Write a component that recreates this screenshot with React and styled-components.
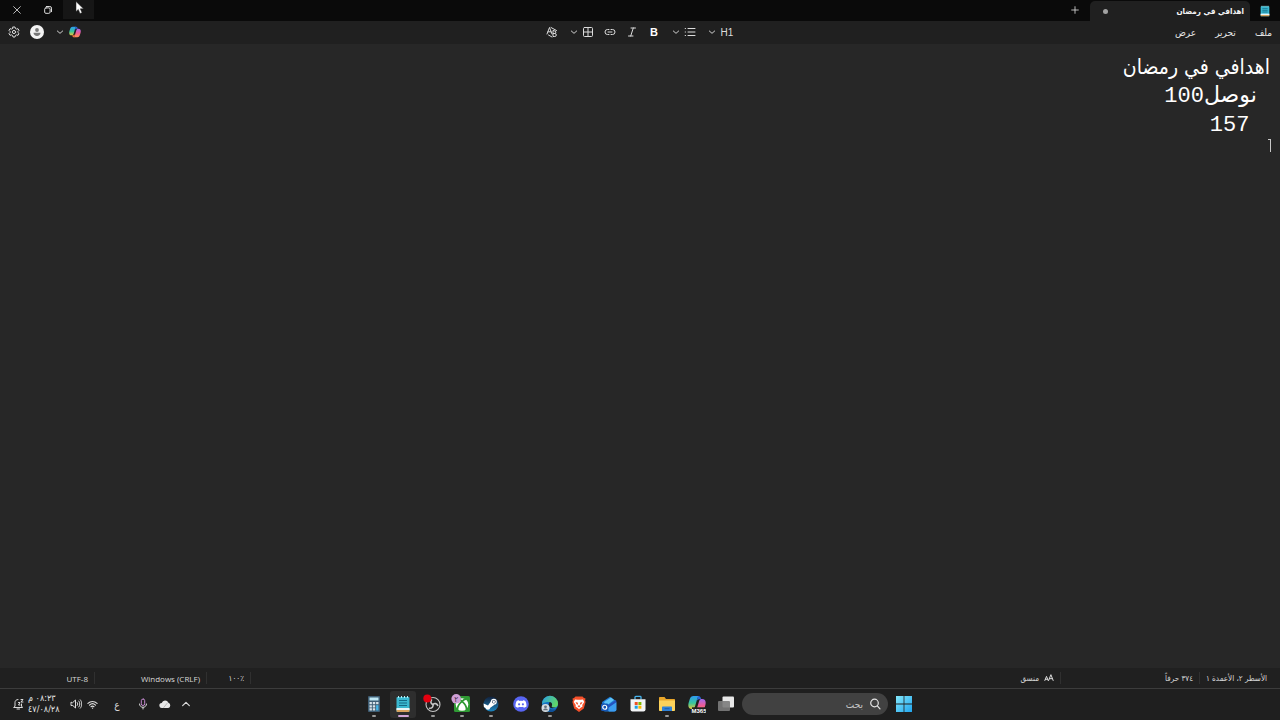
import { useState } from 'react';
import styled, { createGlobalStyle } from 'styled-components';

const GlobalStyle = createGlobalStyle`
  * {
    box-sizing: border-box;
  }
  body {
    margin: 0;
    background: #272727;
    color: #e4e4e4;
    font-family: 'DejaVu Sans Condensed', 'DejaVu Sans', sans-serif;
    font-size: 9px;
  }
  button, input {
    font: inherit;
    color: inherit;
    border: none;
    background: none;
    padding: 0;
    margin: 0;
    outline: none;
  }
  svg {
    display: block;
    flex: none;
  }
`;

const Screen = styled.div`
  display: flex;
  flex-direction: column;
  height: 100vh;
  overflow: hidden;
`;

const TitleBar = styled.header`
  display: flex;
  height: 21px;
  flex: none;
  background: #0a0a0a;
`;

const AppIcon = styled.div`
  display: flex;
  align-items: center;
  justify-content: center;
  width: 30px;
`;

const Tab = styled.div`
  display: flex;
  align-items: center;
  width: 160px;
  height: 20px;
  margin-top: 1px;
  padding: 0 6px 0 13px;
  border-radius: 5px 5px 0 0;
  background: #202020;
  font-size: 8px;
  font-weight: 700;
  color: #f4f4f4;
`;

const Dot = styled.span`
  width: 5px;
  height: 5px;
  margin-right: auto;
  border-radius: 50%;
  background: #a2a2a2;
`;

const IconButton = styled.button`
  display: flex;
  align-items: center;
  justify-content: center;
  width: ${p => p.$width || 14}px;
  height: 20px;
  color: #dcdcdc;
`;

const WindowButtons = styled.div`
  display: flex;
  margin-right: auto;
  padding-left: 1px;
`;

const WindowButton = styled(IconButton)`
  width: 31px;
  height: 19px;
  background: ${p => p.$hover ? '#161616' : 'transparent'};
`;

const Toolbar = styled.div`
  display: grid;
  grid-template-columns: 1fr auto 1fr;
  align-items: center;
  height: 23px;
  flex: none;
  padding-bottom: 1px;
  background: #202020;
`;

const Menu = styled.nav`
  display: flex;
  gap: 19px;
  padding-right: 8px;
  font-size: 10px;
`;

const Tools = styled.div`
  display: flex;
  align-items: center;
  gap: 8px;
  direction: ltr;
`;

const AccountTools = styled(Tools)`
  gap: 9px;
  padding-left: 7px;
`;

const ToolGroup = styled.div`
  display: flex;
  align-items: center;
`;

const LetterButton = styled(IconButton)`
  font-family: 'Liberation Sans', sans-serif;
  font-size: ${p => p.$bold ? 11 : 10}px;
  font-weight: ${p => p.$bold ? 700 : 400};
  color: ${p => p.$bold ? '#fff' : '#dcdcdc'};
`;

const Avatar = styled.span`
  display: flex;
  align-items: center;
  justify-content: center;
  flex: none;
  width: 14px;
  height: 14px;
  border-radius: 50%;
  background: #f3f3f3;
`;

const Editor = styled.main`
  position: relative;
  display: flex;
  flex-direction: column;
  flex: 1;
  min-height: 0;
  padding: 9px 10px;
  background: #272727;
`;

const Line = styled.input`
  width: 100%;
  height: 29px;
  color: #fff;
  font-family: 'Liberation Mono', 'DejaVu Sans', monospace;
  font-size: 22px;
  line-height: 29px;
`;

const TextLine = styled(Line)`
  font-family: 'DejaVu Sans Condensed', 'DejaVu Sans', sans-serif;
  font-size: 21px;
`;

const Caret = styled.span`
  position: absolute;
  top: 95px;
  right: 9px;
  width: 3px;
  height: 13px;
  border-right: 1px solid #c8c8c8;
  border-top: 1px solid #c8c8c8;
`;

const StatusBar = styled.footer`
  display: flex;
  align-items: center;
  height: 20px;
  flex: none;
  background: #202020;
  color: #d8d8d8;
  font-size: 8px;
`;

const StatusCell = styled.div`
  display: flex;
  align-items: center;
  gap: 5px;
  height: 12px;
  padding-right: ${p => p.$first ? 13 : 6}px;
  flex: ${p => p.$width ? 'none' : '1'};
  width: ${p => p.$width ? `${p.$width}px` : 'auto'};
  border-right: ${p => p.$first ? 'none' : '1px solid #303030'};
  white-space: nowrap;
`;

const Latin = styled.span`
  direction: ltr;
  font-family: 'Open Sans', sans-serif;
`;

const Taskbar = styled.footer`
  display: grid;
  grid-template-columns: 1fr auto 1fr;
  align-items: center;
  height: 32px;
  flex: none;
  border-top: 1px solid #3c3c3c;
  padding-bottom: 1px;
  background: #1f1f1f;
`;

const Dock = styled.div`
  display: flex;
  align-items: center;
  grid-column: 2;
  gap: 3px;
  padding-right: 2px;
`;

const Apps = styled.div`
  display: flex;
  justify-content: space-between;
  width: 378px;
`;

const AppButton = styled.button`
  position: relative;
  display: flex;
  align-items: center;
  justify-content: center;
  width: 26px;
  height: 27px;
  border-radius: 3px;
  background: ${p => p.$active ? '#2e2e2e' : 'transparent'};
  &::after {
    content: '';
    position: absolute;
    bottom: 1px;
    left: ${p => p.$active ? 8 : 11}px;
    width: ${p => p.$active ? 11 : 4}px;
    height: 2px;
    border-radius: 1px;
    background: ${p => p.$active ? '#d3a6d8' : '#999'};
    display: ${p => p.$active || p.$running ? 'block' : 'none'};
  }
`;

const Search = styled.label`
  display: flex;
  align-items: center;
  gap: 6px;
  width: 146px;
  height: 22px;
  padding: 0 7px;
  border-radius: 11px;
  background: #414141;
  input {
    flex: 1;
    min-width: 0;
    font-size: 10px;
  }
  input::placeholder {
    color: #c6c6c6;
    opacity: 1;
  }
`;

const Tray = styled.div`
  display: flex;
  align-items: center;
  justify-self: end;
  direction: ltr;
  padding-left: 8px;
`;

const Clock = styled.button`
  direction: rtl;
  width: 32px;
  margin-right: 8px;
  text-align: left;
  line-height: 11px;
  white-space: nowrap;
`;

const Language = styled(IconButton)`
  font-size: 10px;
`;

const Pointer = styled.svg`
  position: absolute;
  top: 1px;
  left: 75px;
`;

function Stroke({ size = 12, width = 1, children }) {
  return (
    <svg width={size} height={size} viewBox="0 0 12 12" fill="none" stroke="currentColor"
      strokeWidth={width} strokeLinecap="round" strokeLinejoin="round">
      {children}
    </svg>
  )
}

function Chevron() {
  return <Stroke size={8} width={1.4}><path d="M2 4.5 6 8l4-3.5" /></Stroke>
}

function NotepadIcon({ size }) {
  return (
    <svg width={size} height={size} viewBox="0 0 18 18">
      <rect x="2.5" y="2" width="13" height="15" rx="1" fill="#3ab8d0" />
      <path d="M2.5 14h13v2a1 1 0 0 1-1 1h-11a1 1 0 0 1-1-1z" fill="#d8a25e" />
      <path d="M2.5 13h13v2h-13z" fill="#e8f6f8" />
      <path d="M5 5.5h8M5 8h8M5 10.5h8" stroke="#126a85" strokeWidth="1.1" />
      <path d="M4.5 1v2M7.5 1v2M10.5 1v2M13.5 1v2" stroke="#b6eef5" strokeWidth="1" />
    </svg>
  )
}

function CopilotIcon({ size, label }) {
  return (
    <svg width={size} height={size} viewBox="0 0 18 18">
      <defs>
        <linearGradient id="cpA" x1="0" y1="0" x2="0" y2="1">
          <stop offset="0" stopColor="#2d9bf3" />
          <stop offset=".55" stopColor="#38c59a" />
          <stop offset="1" stopColor="#e9c63c" />
        </linearGradient>
        <linearGradient id="cpB" x1="0" y1="0" x2="0" y2="1">
          <stop offset="0" stopColor="#a06bf0" />
          <stop offset=".5" stopColor="#ee5b97" />
          <stop offset="1" stopColor="#ff9250" />
        </linearGradient>
      </defs>
      <path d="M5.500 1H11C9.500 2 9.200 4 8.600 6L7 11.500c-.6 2-1.500 2.500-3 2.500C.5 14-.2 11.500.6 8l1.200-4C2.400 2 3.600 1 5.500 1z" fill="url(#cpA)" />
      <path d="M10 1c2.500 0 2.700 1.300 3.200 3.300H11C9.500 4.500 8.800 5.500 8 8z" fill="#2868d8" />
      <path d="M12.500 17H7c1.500-1 1.800-3 2.400-5L11 6.500c.6-2 1.500-2.500 3-2.500 3.500 0 4.200 2.500 3.400 6l-1.200 4c-.6 2-1.800 3-3.700 3z" fill="url(#cpB)" />
      <path d="M8 17c-2.500 0-2.700-1.300-3.200-3.300H7C8.500 13.500 9.200 12.500 10 10z" fill="#f2703f" />
      {label && (
        <>
          <path d="M4 12.300h14V18H4z" fill="#1f1f1f" />
          <text x="11" y="17.500" fontSize="6" fontWeight="700" fill="#fff" textAnchor="middle" fontFamily="Liberation Sans, sans-serif">{label}</text>
        </>
      )}
    </svg>
  )
}

function CalculatorIcon() {
  return (
    <svg width="18" height="18" viewBox="0 0 18 18">
      <rect x="3" y="1" width="12" height="16" rx="1" fill="#3f5d73" />
      <path d="M4.500 2.500h9v3h-9z" fill="#bfe8f5" />
      <path d="M4.500 7h2.400v2.200H4.500zM7.800 7h2.400v2.200H7.800zM4.500 10.200h2.400v2.200H4.500zM7.800 10.200h2.400v2.200H7.800zM4.500 13.300h2.400v2.200H4.500zM7.800 13.300h2.400v2.200H7.800z" fill="#d7e3ea" />
      <path d="M11.100 7h2.400v2.200h-2.400z" fill="#d7e3ea" />
      <path d="M11.100 10.200h2.400v5.300h-2.400z" fill="#45b5e6" />
    </svg>
  )
}

function ObsIcon() {
  return (
    <svg width="20" height="20" viewBox="0 0 20 20">
      <circle cx="10" cy="10.500" r="7" fill="#202020" stroke="#c5c5c5" strokeWidth="1.100" />
      <g fill="none" stroke="#c5c5c5" strokeWidth="1.600" strokeLinecap="round">
        <path d="M10 10.500c-2-.5-2.800-2.500-1.500-4.500" />
        <path d="M10 10.500c1.500-1.500 3.800-1.200 4.700.8" />
        <path d="M10 10.500c.5 2-1 3.900-3.400 3.800" />
      </g>
      <circle cx="4.300" cy="4.500" r="4" fill="#e3000f" />
    </svg>
  )
}

function XboxIcon() {
  return (
    <svg width="22" height="20" viewBox="0 0 22 20">
      <rect x="3" y="2" width="16" height="16" rx="1.500" fill="#2f9a34" />
      <circle cx="11" cy="10.500" r="6.300" fill="#fff" />
      <g fill="none" stroke="#2f9a34" strokeWidth="1.800" strokeLinecap="round">
        <path d="M7.200 5c1.300 0 2.600 1.200 3.800 2.400 2.600 2.200 4.500 5 4.600 8" />
        <path d="M14.800 5c-1.300 0-2.600 1.200-3.800 2.400-2.600 2.200-4.500 5-4.600 8" />
      </g>
      <circle cx="5.200" cy="4.800" r="4.800" fill="#cf9fd6" />
      <text x="5.200" y="8" fontSize="8" fill="#3d2543" textAnchor="middle">٢</text>
    </svg>
  )
}

function SteamIcon() {
  return (
    <svg width="18" height="18" viewBox="0 0 18 18">
      <defs>
        <linearGradient id="steam" x1="0" y1="0" x2="0" y2="1">
          <stop offset="0" stopColor="#12203a" />
          <stop offset="1" stopColor="#1b84be" />
        </linearGradient>
      </defs>
      <circle cx="9" cy="9" r="7.500" fill="url(#steam)" />
      <path d="M1.600 8.500 6 10.400l3-4.200 3.500 3.600-4.200 3a2.500 2.500 0 0 1-4.800.3L1.900 12z" fill="#fff" />
      <circle cx="11.800" cy="6.800" r="3" fill="#fff" />
      <circle cx="11.800" cy="6.800" r="1.800" fill="#1a3555" />
      <circle cx="11.800" cy="6.800" r="1.200" fill="#fff" />
    </svg>
  )
}

function DiscordIcon() {
  return (
    <svg width="18" height="18" viewBox="0 0 18 18">
      <circle cx="9" cy="9" r="7.800" fill="#5865f2" />
      <path d="M6.900 5.200c-1 .2-1.700.5-2.200.9-1 1.800-1.300 3.600-1.200 5.400.8.700 1.700 1.100 2.700 1.300l.6-1.100a8 8 0 0 0 4.400 0l.6 1.100c1-.2 1.900-.6 2.700-1.300.1-1.800-.2-3.600-1.200-5.400-.5-.4-1.200-.7-2.200-.9l-.5.8a8 8 0 0 0-3.200 0z" fill="#fff" />
      <circle cx="7.100" cy="9.300" r="1.100" fill="#5865f2" />
      <circle cx="10.900" cy="9.300" r="1.100" fill="#5865f2" />
    </svg>
  )
}

function EdgeIcon() {
  return (
    <svg width="18" height="18" viewBox="0 0 18 18">
      <defs>
        <linearGradient id="edge" x1="0" y1="0" x2="1" y2=".4">
          <stop offset="0" stopColor="#2a9ee8" />
          <stop offset="1" stopColor="#5fd668" />
        </linearGradient>
      </defs>
      <circle cx="9" cy="9" r="8" fill="#1673c2" />
      <path d="M1 9a8 8 0 0 1 16-.5c.1 3-2 4-4.200 4-1.800 0-2.800-.7-2.200-1.500 1-1.500.2-4-2.400-4C5 7 2.500 7.500 1 9z" fill="url(#edge)" />
      <path d="M7.500 8.500c-1.500 3 1 6.500 5.500 6 1 0 2.300-.7 2.700-1-1.800 3-5 4-7.500 3.500z" fill="#0f4f96" />
      <path d="M10.700 10.900c1-1.500.2-3.600-2-3.900-1.300 1.500-1.400 4.500.6 5.700 1.200.8 3.700.5 5-.4-2.200.5-4.300-.3-3.600-1.400z" fill="#1f1f1f" />
      <circle cx="4.500" cy="13" r="4" fill="#d5dbe0" />
      <circle cx="4.500" cy="11.800" r="1.400" fill="#65717b" />
      <path d="M2 15.300c.5-2.300 4.500-2.300 5 0z" fill="#65717b" />
    </svg>
  )
}

function BraveIcon() {
  return (
    <svg width="18" height="18" viewBox="0 0 18 18">
      <path d="m5.500 1.500 7 0 1.500 1.600 1.500.4-.4 2 .5 1.500-1.800 6.500L9 17l-4.800-3.500L2.400 7l.5-1.500-.4-2L4 3.100z" fill="#f4502a" />
      <path d="m5 4.500 2.500.3h3l2.500-.3 1.200 2.500-2 3 .3 1.500-2.300 1.400L9 14.300l-1.200-1.400-2.300-1.400.3-1.500-2-3z" fill="#fff" />
      <path d="m5.500 7 2.300.7.200 2L6.500 9zM12.500 7l-2.300.7-.2 2 1.500-.7zM7.500 11 9 10.200l1.500.8L9 12.500z" fill="#f4502a" />
    </svg>
  )
}

function OutlookIcon() {
  return (
    <svg width="18" height="18" viewBox="0 0 18 18">
      <path d="M2 7 10 1.800 16 6v8.500a2 2 0 0 1-2 2H5a2 2 0 0 1-2-2z" fill="#1f7ad6" />
      <path d="m4 7 7-4.500L14 5 6 11z" fill="#5ec4f7" />
      <path d="m16.500 7-10 6.500L9 16.500h5.500a2 2 0 0 0 2-2z" fill="#3c9df0" />
      <path d="m7 11 9-6 .5 2L8 13z" fill="#2552c0" />
      <rect x="1" y="8.500" width="7.500" height="7.500" rx="1.500" fill="#1556b5" />
      <circle cx="4.750" cy="12.250" r="2" fill="none" stroke="#fff" strokeWidth="1.200" />
    </svg>
  )
}

function StoreIcon() {
  return (
    <svg width="18" height="18" viewBox="0 0 18 18">
      <path d="M6 4.500V2.200c0-.5.300-.8.800-.8h4.400c.5 0 .8.300.8.800v2.300" fill="none" stroke="#46b4ee" strokeWidth="1.300" />
      <path d="M1.500 4.300h15v10.200a2 2 0 0 1-2 2h-11a2 2 0 0 1-2-2z" fill="#f2f4f6" />
      <path d="M5.700 7h3v3h-3z" fill="#f05125" />
      <path d="M9.400 7h3v3h-3z" fill="#7eb900" />
      <path d="M5.700 10.700h3v3h-3z" fill="#1ba1e6" />
      <path d="M9.400 10.700h3v3h-3z" fill="#fbb800" />
    </svg>
  )
}

function FolderIcon() {
  return (
    <svg width="18" height="18" viewBox="0 0 18 18">
      <path d="M1 3c0-.6.400-1 1-1h4.500L8 4h8c.6 0 1 .4 1 1v10H1z" fill="#e9a62a" />
      <path d="M1 5.500h16V15c0 .6-.4 1-1 1H2c-.6 0-1-.4-1-1z" fill="#fbd25b" />
      <path d="M4 12.500c0-.6.400-1 1-1h8c.6 0 1 .4 1 1V16H4z" fill="#2f82d8" />
      <path d="M6.500 13.700h5" stroke="#1b5fae" strokeWidth="1" />
    </svg>
  )
}

function TaskViewIcon() {
  return (
    <svg width="18" height="18" viewBox="0 0 18 18">
      <rect x="5.500" y="1.500" width="11.500" height="11" rx="1" fill="#e8e8e8" />
      <rect x="1" y="6" width="12" height="10" rx="1" fill="#7b7b7b" fillOpacity=".9" />
    </svg>
  )
}

function StartIcon() {
  return (
    <svg width="16" height="16" viewBox="0 0 16 16">
      <defs>
        <linearGradient id="start" x1="0" y1="0" x2="1" y2="1">
          <stop offset="0" stopColor="#84e8fb" />
          <stop offset="1" stopColor="#20a5ee" />
        </linearGradient>
      </defs>
      <path d="M0 0h7.600v7.600H0zM8.400 0H16v7.600H8.400zM0 8.400h7.600V16H0zM8.400 8.400H16V16H8.400z" fill="url(#start)" />
    </svg>
  )
}

const apps = [
  { name: 'عرض المهام', icon: <TaskViewIcon /> },
  { name: 'Microsoft 365', icon: <CopilotIcon size={18} label="M365" /> },
  { name: 'مستكشف الملفات', icon: <FolderIcon />, running: true },
  { name: 'Store', icon: <StoreIcon /> },
  { name: 'Outlook', icon: <OutlookIcon /> },
  { name: 'Brave', icon: <BraveIcon /> },
  { name: 'Edge', icon: <EdgeIcon />, running: true },
  { name: 'Discord', icon: <DiscordIcon /> },
  { name: 'Steam', icon: <SteamIcon />, running: true },
  { name: 'Xbox', icon: <XboxIcon />, running: true },
  { name: 'OBS', icon: <ObsIcon />, running: true },
  { name: 'المفكرة', icon: <NotepadIcon size={18} />, active: true },
  { name: 'الحاسبة', icon: <CalculatorIcon />, running: true },
];

function App() {
  const [lines, setLines] = useState(['اهدافي في رمضان', ' نوصل100', ' \u2004157', ''])

  const editLine = (index, value) => {
    setLines(lines.map((line, i) => i === index ? value : line))
  }

  return (
    <Screen dir="rtl" lang="ar">
      <GlobalStyle />
      <TitleBar>
        <AppIcon><NotepadIcon size={12} /></AppIcon>
        <Tab>
          <span>اهدافي في رمضان</span>
          <Dot />
        </Tab>
        <IconButton $width={31} aria-label="علامة تبويب جديدة">
          <Stroke size={10}><path d="M6 2v8M2 6h8" /></Stroke>
        </IconButton>
        <WindowButtons>
          <WindowButton $hover aria-label="تصغير" />
          <WindowButton aria-label="استعادة">
            <Stroke size={10} width={1.2}>
              <rect x="2" y="3.500" width="6.500" height="6.500" rx="1.500" />
              <path d="M4 1.800h4.200a2 2 0 0 1 2 2V8" />
            </Stroke>
          </WindowButton>
          <WindowButton aria-label="إغلاق">
            <Stroke size={10}><path d="m2 2 8 8M10 2l-8 8" /></Stroke>
          </WindowButton>
        </WindowButtons>
      </TitleBar>

      <Toolbar>
        <Menu>
          <button>ملف</button>
          <button>تحرير</button>
          <button>عرض</button>
        </Menu>
        <Tools>
          <IconButton aria-label="مسح التنسيق">
            <Stroke>
              <path d="M1 8 3.500 1.500 6 8M2 5.800h3M7 4.800v5.700h1.800a1.500 1.500 0 0 0 0-3H7h1.500a1.300 1.300 0 0 0 0-2.700zM5 1.500l5.500 3M2.500 9l3.500 2" />
            </Stroke>
          </IconButton>
          <ToolGroup>
            <IconButton aria-label="خيارات الجدول"><Chevron /></IconButton>
            <IconButton aria-label="جدول">
              <Stroke>
                <rect x="1.500" y="1.500" width="9" height="9" rx="1" />
                <path d="M6 1.500v9M1.500 6h9" />
              </Stroke>
            </IconButton>
          </ToolGroup>
          <IconButton aria-label="ارتباط">
            <Stroke>
              <path d="M5 3.500H3.500a2.500 2.500 0 0 0 0 5H5M7 3.500h1.500a2.500 2.500 0 0 1 0 5H7M4 6h4" />
            </Stroke>
          </IconButton>
          <IconButton aria-label="مائل">
            <Stroke><path d="M5 2h4.500M2.500 10H7M7.300 2l-2.600 8" /></Stroke>
          </IconButton>
          <LetterButton $bold aria-label="غامق">B</LetterButton>
          <ToolGroup>
            <IconButton aria-label="خيارات القائمة"><Chevron /></IconButton>
            <IconButton aria-label="قائمة">
              <Stroke><path d="M4 2.500h7M4 6h7M4 9.500h7M1.200 2.500h.3M1.200 6h.3M1.200 9.500h.3" /></Stroke>
            </IconButton>
          </ToolGroup>
          <ToolGroup>
            <IconButton aria-label="خيارات العنوان"><Chevron /></IconButton>
            <LetterButton $width={16}>H1</LetterButton>
          </ToolGroup>
        </Tools>
        <AccountTools>
          <IconButton aria-label="الإعدادات">
            <Stroke>
              <path d="M5 1h2l.4 1.500 1.100.6 1.500-.4 1 1.700L9.900 5.500v1l1.100 1.100-1 1.700-1.500-.4-1.100.6L7 11H5l-.4-1.500-1.100-.6-1.500.4-1-1.700 1.100-1.100v-1L1 4.400l1-1.700 1.500.4 1.100-.6z" />
              <circle cx="6" cy="6" r="1.600" />
            </Stroke>
          </IconButton>
          <IconButton aria-label="الحساب">
            <Avatar>
              <svg width="8" height="8" viewBox="0 0 8 8" fill="#777">
                <circle cx="4" cy="2" r="1.900" />
                <path d="M.5 4.700h7c0 2-1.500 3.200-3.500 3.200S.5 6.700.5 4.700z" />
              </svg>
            </Avatar>
          </IconButton>
          <ToolGroup>
            <IconButton aria-label="خيارات Copilot"><Chevron /></IconButton>
            <IconButton $width={16} aria-label="Copilot"><CopilotIcon size={12} /></IconButton>
          </ToolGroup>
        </AccountTools>
      </Toolbar>

      <Editor>
        {lines.map((line, index) => {
          const Field = index === 0 ? TextLine : Line
          return (
            <Field
              key={index}
              type="text"
              aria-label={`سطر ${index + 1}`}
              spellCheck={false}
              value={line}
              onChange={e => editLine(index, e.target.value)}
            />
          )
        })}
        <Caret />
      </Editor>

      <StatusBar>
        <StatusCell $first $width={80}>الأسطر ٢، الأعمدة ١</StatusCell>
        <StatusCell $width={139}>٣٧٤ حرفاً</StatusCell>
        <StatusCell>
          <Stroke size={10} width={1.2}><path d="m1 9 2-5 2 5M1.700 7.500h2.600M5.500 9 8.300 2 11 9M6.500 6.800H10" /></Stroke>
          منسق
        </StatusCell>
        <StatusCell $width={44}><span dir="ltr">١٠٠٪</span></StatusCell>
        <StatusCell $width={112}><Latin>Windows (CRLF)</Latin></StatusCell>
        <StatusCell $width={95}><Latin>UTF-8</Latin></StatusCell>
      </StatusBar>

      <Taskbar>
        <Dock>
          <AppButton aria-label="ابدأ"><StartIcon /></AppButton>
          <Search>
            <Stroke width={1.200}><circle cx="5.500" cy="5" r="3.800" /><path d="m8.300 7.800 2.700 3" /></Stroke>
            <input type="text" placeholder="بحث" aria-label="بحث" />
          </Search>
          <Apps>
            {apps.map(app => (
              <AppButton key={app.name} aria-label={app.name} $active={app.active} $running={app.running}>
                {app.icon}
              </AppButton>
            ))}
          </Apps>
        </Dock>
        <Tray>
          <IconButton $width={20} aria-label="الإشعارات">
            <Stroke>
              <path d="M2 9.500h8.500L9.500 8V6M6 1.500C4 1.500 3 3 3 4.500V8L2 9.500M5 11h2.500M6.500 4.500H8L6.500 7H8M9 1.500h2L9 4h2" />
            </Stroke>
          </IconButton>
          <Clock>
            <div>٠٨:٢٣ م</div>
            <div>٤٧/٠٨/٢٨</div>
          </Clock>
          <IconButton $width={16} aria-label="الصوت">
            <Stroke><path d="M1 4.500v3h1.800L5.500 10V2L2.800 4.500zM7.200 4.500c.7.800.7 2.200 0 3M8.800 3c1.400 1.600 1.400 4.400 0 6M10.300 1.800c2 2.300 2 6.100 0 8.400" /></Stroke>
          </IconButton>
          <IconButton $width={16} aria-label="Wi-Fi">
            <Stroke size={11} width={1.3}><path d="M1 4.800c2.900-2.700 7.100-2.700 10 0M2.700 6.700c1.900-1.800 4.700-1.800 6.600 0M4.400 8.400c1-.9 2.200-.9 3.200 0M6 10h.1" /></Stroke>
          </IconButton>
          <Language $width={34}>ع</Language>
          <IconButton $width={18} aria-label="الميكروفون">
            <Stroke>
              <rect x="4.300" y="1" width="3.400" height="6.500" rx="1.700" stroke="#c58ad0" />
              <path d="M2.500 6c0 4.500 7 4.500 7 0M6 9.500V11" />
            </Stroke>
          </IconButton>
          <IconButton $width={25} aria-label="OneDrive">
            <svg width="12" height="12" viewBox="0 0 12 12">
              <path d="M3 10a2.500 2.500 0 0 1-.3-5 3.600 3.600 0 0 1 6.700-.2A2.700 2.700 0 0 1 9.200 10z" fill="#e6e6e6" />
              <path d="m4.500 9.800 4-5" stroke="#aaa" strokeWidth=".8" />
            </svg>
          </IconButton>
          <IconButton $width={18} aria-label="إظهار الرموز المخفية">
            <Stroke size={10} width={1.4}><path d="m2 8 4-4 4 4" /></Stroke>
          </IconButton>
        </Tray>
      </Taskbar>

      <Pointer width="10" height="14" viewBox="0 0 10 14">
        <path d="M1 .5v10l2.300-2.100L5 12.500l2-.8L5.300 7.800h3.200z" fill="#fff" stroke="#222" strokeWidth=".5" />
      </Pointer>
    </Screen>
  )
}

export default App
